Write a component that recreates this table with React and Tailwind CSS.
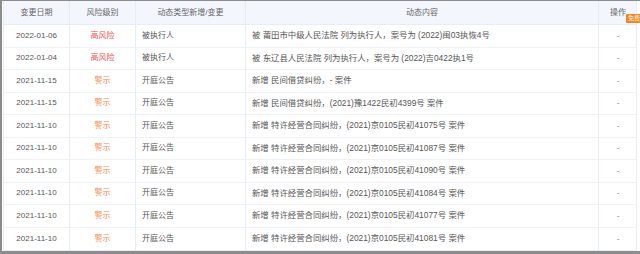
import React from 'react';

const rows = [
  { date: '2022-01-06', level: '高风险', type: '被执行人', content: '被 莆田市中级人民法院 列为执行人，案号为 (2022)闽03执恢4号' },
  { date: '2022-01-04', level: '高风险', type: '被执行人', content: '被 东辽县人民法院 列为执行人，案号为 (2022)吉0422执1号' },
  { date: '2021-11-15', level: '警示', type: '开庭公告', content: '新增 民间借贷纠纷，- 案件' },
  { date: '2021-11-15', level: '警示', type: '开庭公告', content: '新增 民间借贷纠纷，(2021)豫1422民初4399号 案件' },
  { date: '2021-11-10', level: '警示', type: '开庭公告', content: '新增 特许经营合同纠纷，(2021)京0105民初41075号 案件' },
  { date: '2021-11-10', level: '警示', type: '开庭公告', content: '新增 特许经营合同纠纷，(2021)京0105民初41087号 案件' },
  { date: '2021-11-10', level: '警示', type: '开庭公告', content: '新增 特许经营合同纠纷，(2021)京0105民初41090号 案件' },
  { date: '2021-11-10', level: '警示', type: '开庭公告', content: '新增 特许经营合同纠纷，(2021)京0105民初41084号 案件' },
  { date: '2021-11-10', level: '警示', type: '开庭公告', content: '新增 特许经营合同纠纷，(2021)京0105民初41077号 案件' },
  { date: '2021-11-10', level: '警示', type: '开庭公告', content: '新增 特许经营合同纠纷，(2021)京0105民初41081号 案件' },
];

const cols = 'grid grid-cols-[66px_66px_110px_353px_38px]';

const App = () => {
  return (
    <div
      className="w-[640px] h-[254px] bg-[#8c8c8c] pl-[2px] pt-[1px] pb-[3px] overflow-hidden"
      style={{ fontFamily: '"Liberation Sans", "Noto Sans CJK SC", sans-serif' }}
    >
      <div className="relative h-full bg-white pl-[1px]">
        <div className="w-[634px] border-x border-b border-[#e6edf7] text-[8px] text-[#555]">
          <div className={`${cols} h-[24px] bg-[#f3f7fd] border-b border-[#e6edf7] text-[#666]`}>
            <div className="flex items-center justify-center border-r border-[#e6edf7]">变更日期</div>
            <div className="flex items-center justify-center border-r border-[#e6edf7]">风险级别</div>
            <div className="flex items-center justify-center border-r border-[#e6edf7]">动态类型新增/变更</div>
            <div className="flex items-center justify-center border-r border-[#e6edf7]">动态内容</div>
            <div className="flex items-center justify-center">操作</div>
          </div>
          {rows.map((r, i) => (
            <div key={i} className={`${cols} h-[22.5px] ${i < rows.length - 1 ? 'border-b border-[#eef2f8]' : ''}`}>
              <div className="flex items-center justify-center border-r border-[#e6edf7]">{r.date}</div>
              <div
                className={`flex items-center justify-center border-r border-[#e6edf7] ${
                  r.level === '高风险' ? 'text-[#f0524f]' : 'text-[#f78a4c]'
                }`}
              >
                {r.level}
              </div>
              <div className="flex items-center pl-[6px] border-r border-[#e6edf7]">{r.type}</div>
              <div className="flex items-center pl-[6px] border-r border-[#e6edf7] whitespace-nowrap text-[8.4px]">{r.content}</div>
              <div className="flex items-center justify-center text-[#777]">-</div>
            </div>
          ))}
        </div>
        <div className="absolute left-[624px] top-[13px] h-[9px] px-[2px] bg-[#f5841f] text-white text-[6px] leading-[9px] rounded-[1px] whitespace-nowrap">
          免费
        </div>
      </div>
    </div>
  );
};

export default App;
